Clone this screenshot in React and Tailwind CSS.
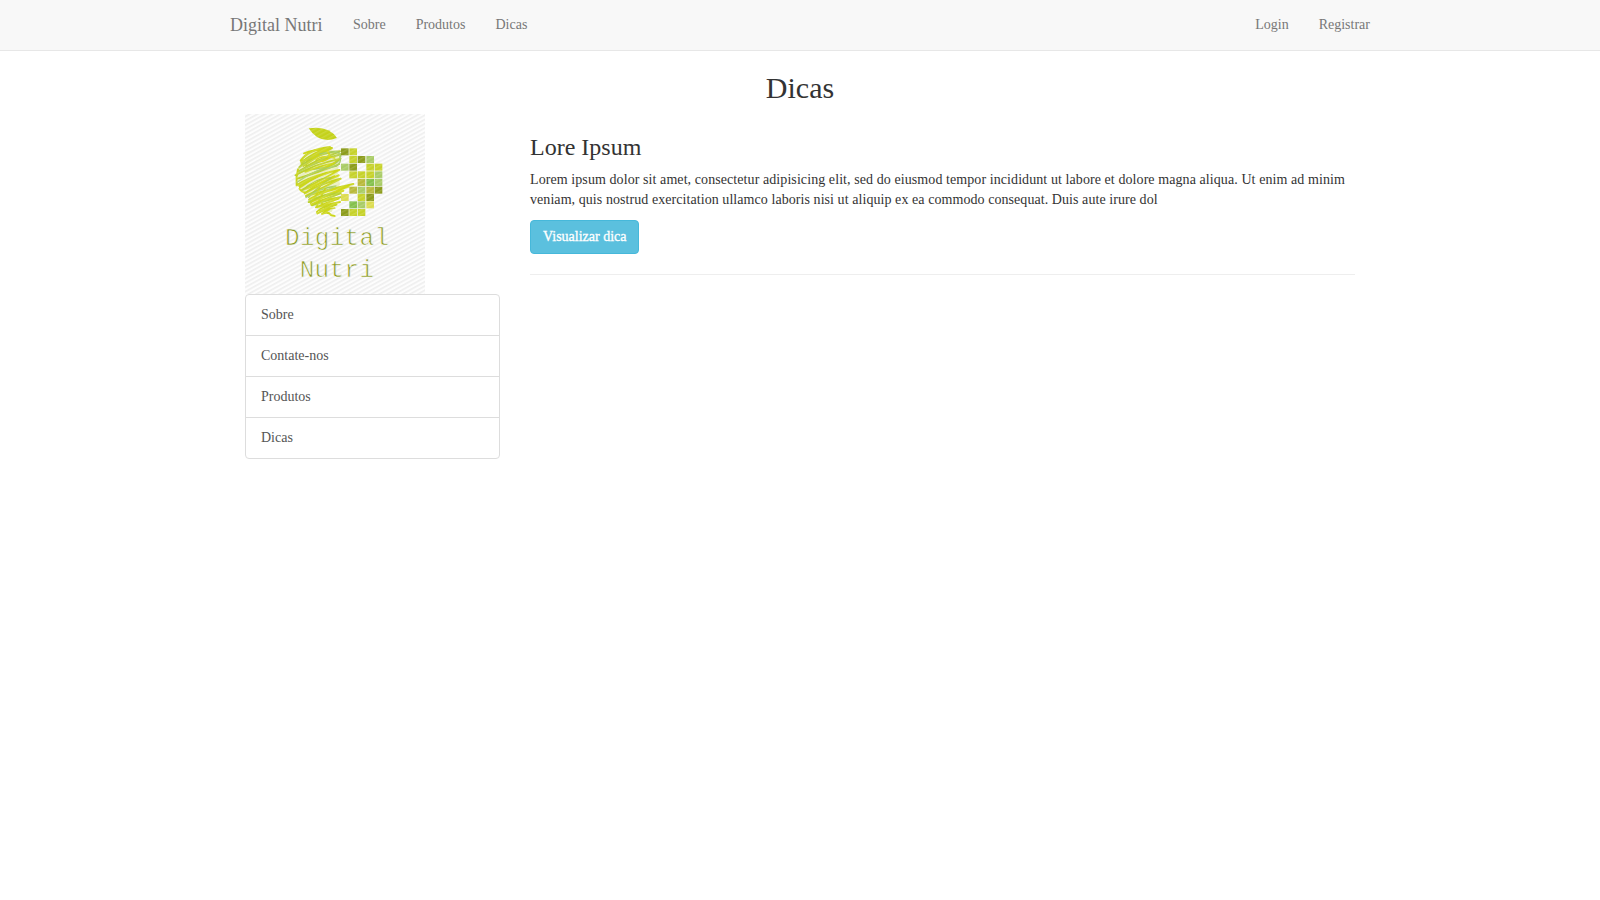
const D = '#8c9c1c', L = '#c6d22a', G = '#a9cc66', E = '#84c04c', O = '#b9b93a', Y = '#dcdc50';

const COLS = [303, 328, 353, 379, 404];
const ROWS = [115, 138, 161, 184, 207, 230, 252, 274, 297];
const CELLS = [
  [D, L, 0, 0, 0],
  [0, L, D, G, 0],
  [G, D, 0, L, L],
  [0, L, L, L, G],
  [0, 0, O, E, G],
  [0, O, G, O, D],
  [Y, 0, L, D, 0],
  [0, E, G, Y, 0],
  [D, L, L, 0, 0],
];

const SCRIBBLES = [
  ['M182 152 Q205 118 270 111 Q220 128 184 158 Q225 132 276 114 Q235 136 190 168', '#c8d41c', 6],
  ['M178 172 Q230 128 300 124 Q240 146 176 184 Q240 150 304 132', '#b4cc3c', 6],
  ['M192 130 Q235 114 262 122 Q215 150 184 152', '#ccd61a', 6],
  ['M240 132 Q300 116 302 138 Q296 168 232 176 Q190 180 176 190', '#a8cc60', 5],
  ['M262 124 Q276 140 262 148 Q240 160 228 150 Q244 134 284 144', '#d4d818', 5],
  ['M184 166 Q190 148 214 138 Q200 152 198 170 Q230 150 262 142', '#bccf2c', 5],
  ['M166 196 Q220 164 302 146 Q250 182 172 206 Q230 190 298 162', '#bed02a', 5],
  ['M174 178 Q168 200 170 226 Q196 206 262 188 Q216 204 178 228', '#c8d41c', 6],
  ['M196 186 Q240 166 284 160 Q240 182 204 196', '#ccd61a', 5],
  ['M180 232 Q240 188 298 180 Q246 210 186 240 Q234 224 296 196', '#ccd61a', 6],
  ['M172 216 Q220 180 290 168 Q306 154 300 140', '#a8cc60', 4],
  ['M178 236 Q186 250 200 246 Q240 214 284 198', '#d0d818', 5],
  ['M194 250 Q246 218 302 206 Q256 230 198 258 Q260 240 340 222', '#c8d41c', 6],
  ['M186 242 Q232 200 274 204 Q230 232 206 262', '#b4cc3c', 4],
  ['M198 262 Q240 234 288 228 Q246 246 206 270', '#a8cc60', 4],
  ['M208 268 Q254 238 326 230 Q262 252 210 276 Q256 258 310 242', '#d0d818', 6],
  ['M206 276 Q250 250 302 250 Q250 268 216 286 Q270 266 322 258', '#b8d030', 6],
  ['M214 284 Q250 264 296 266 Q260 278 228 292 Q262 284 300 276', '#ccd61a', 6],
  ['M240 228 Q228 262 212 280 M256 236 Q238 266 230 290 M238 268 L256 296', '#c8d41c', 5],
  ['M230 306 Q248 286 290 284 Q262 292 240 304 Q262 296 284 294', '#c8d41c', 5],
  ['M232 310 Q250 300 268 298 Q254 306 246 312 Q264 302 274 316 L284 318', '#ccd61a', 6],
];

function Logo() {
  return (
    <svg className="block h-[180px] w-[180px]" viewBox="15 12 540 540">
      <defs>
        <pattern id="stripes" width="40" height="11.2" patternUnits="userSpaceOnUse" patternTransform="rotate(-29)">
          <rect width="40" height="11.2" fill="#fdfdfd" />
          <rect width="40" height="5" fill="#efefef" />
        </pattern>
        <pattern id="sheen" width="40" height="11.2" patternUnits="userSpaceOnUse" patternTransform="rotate(-29)">
          <rect width="40" height="4" fill="#fff" opacity="0.14" />
        </pattern>
      </defs>
      <rect x="15" y="12" width="540" height="540" fill="url(#stripes)" />
      <path d="M206 55 Q266 46 291 84 Q238 105 206 55Z" fill="#c4d21a" />
      <path d="M196 132 Q240 108 296 124 L302 150 L292 184 L300 222 L286 256 L276 306 L240 306 L176 226 L172 178Z" fill="#cfdc58" opacity="0.35" />
      <g fill="none" strokeLinecap="round" strokeLinejoin="round">
        {SCRIBBLES.map(([d, c, w]) => (
          <path key={d} d={d} stroke={c} strokeWidth={w} />
        ))}
      </g>
      {CELLS.map((row, r) =>
        row.map((c, i) => (c ? <rect key={`${r}-${i}`} x={COLS[i]} y={ROWS[r]} width="23" height="21" fill={c} /> : null)),
      )}
      <rect x="160" y="50" width="270" height="272" fill="url(#sheen)" />
      <g
        fill="#8a9a20"
        stroke="#f8f8f8"
        strokeWidth="2"
        fontSize="73"
        fontFamily="'Liberation Mono', monospace"
      >
        <text x="135" y="404" textLength="312">Digital</text>
        <text x="179" y="500" textLength="223">Nutri</text>
      </g>
    </svg>
  );
}

function NavLink({ children }) {
  return <a href="#" className="block px-[15px] py-[15px] leading-5">{children}</a>;
}

export default function App() {
  const menu = ['Sobre', 'Contate-nos', 'Produtos', 'Dicas'];
  return (
    <div className="min-h-screen bg-white font-['Liberation_Serif',serif] text-[14px] leading-5 text-[#333]">
      <nav className="h-[51px] border-b border-[#e7e7e7] bg-[#f8f8f8] text-[#777]">
        <div className="mx-auto flex w-[1170px] justify-between">
          <div className="flex">
            <a href="#" className="block w-[123px] p-[15px] text-[18px] leading-5 whitespace-nowrap">Digital Nutri</a>
            <NavLink>Sobre</NavLink>
            <NavLink>Produtos</NavLink>
            <NavLink>Dicas</NavLink>
          </div>
          <div className="flex">
            <NavLink>Login</NavLink>
            <NavLink>Registrar</NavLink>
          </div>
        </div>
      </nav>
      <main className="mx-auto w-[1110px]">
        <h2 className="mt-5 mb-[10px] text-center text-[30px] leading-[33px]">Dicas</h2>
        <div className="flex gap-[30px]">
          <aside className="w-[255px] shrink-0">
            <Logo />
            <ul className="divide-y divide-[#ddd] rounded-[4px] border border-[#ddd] text-[#555]">
              {menu.map((m) => (
                <li key={m}><a href="#" className="block px-[15px] py-[10px]">{m}</a></li>
              ))}
            </ul>
          </aside>
          <section className="flex-1">
            <h3 className="mt-5 mb-[10px] text-[24px] leading-[26px]">Lore Ipsum</h3>
            <p className="mb-[10px]">
              <span className="tracking-[0.08px]">Lorem ipsum dolor sit amet, consectetur adipisicing elit, sed do eiusmod tempor incididunt ut labore et dolore magna aliqua. Ut enim ad minim</span><br />
              <span className="tracking-[0.065px]">veniam, quis nostrud exercitation ullamco laboris nisi ut aliquip ex ea commodo consequat. Duis aute irure dol</span>
            </p>
            <button className="block w-[109px] rounded-[4px] border border-[#46b8da] bg-[#5bc0de] px-3 py-[6px] whitespace-nowrap text-white [-webkit-text-stroke:0.3px_white]">Visualizar dica</button>
            <hr className="my-5 border-[#eee]" />
          </section>
        </div>
      </main>
    </div>
  );
}
